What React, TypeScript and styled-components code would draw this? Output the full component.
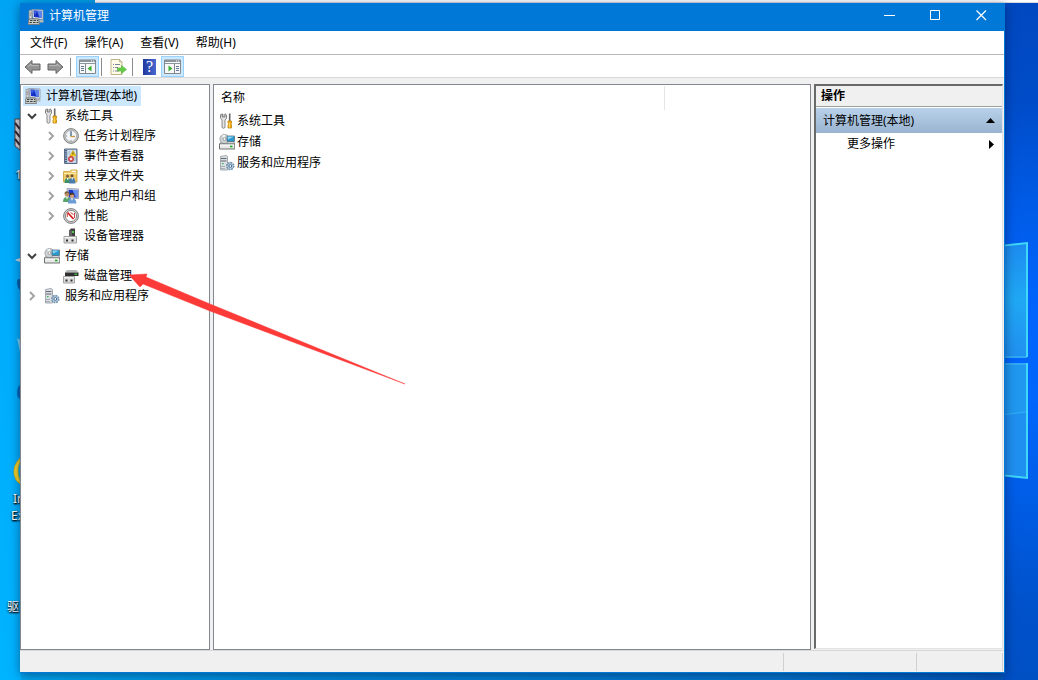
import React, { useState } from "react";
import styled, { createGlobalStyle, css } from "styled-components";

const GlobalStyle = createGlobalStyle`
  *, *::before, *::after { box-sizing: border-box; }
  body { margin: 0; }
  body, button {
    font-family: "Noto Sans", "Noto Sans CJK SC", sans-serif;
    font-size: 12px;
    line-height: 20px;
    color: #000;
  }
  button { padding: 0; border: 0; background: none; cursor: default; text-align: left; white-space: nowrap; }
  ul { list-style: none; margin: 0; padding: 0; }
`;

/* ---------- desktop ---------- */

const Desktop = styled.div`
  position: relative;
  display: flex;
  flex-direction: column;
  min-height: 100vh;
  padding: 0 33px 7px 20px;
  overflow: hidden;
  background:
    linear-gradient(180deg, #0048c0 0, #004cc8 100px, #005ce8 210px, #0064fc 300px, #0066fc 400px, #005ee8 490px, #0052cc 600px, #0050c4 100%) right / 34px 100% no-repeat,
    linear-gradient(180deg, #00a4f4 0, #00acfc 300px, #00b4ff 100%) left / 21px 100% no-repeat,
    linear-gradient(90deg, #00a8f0 0, #0088d8 30%, #0074cc 75%, #0050b8 100%);
`;

const BackStrip = styled.div`
  height: 3px;
  margin: 0 -33px 0 75px;
  background: #fff;
  border-bottom: 1px solid #d8dce4;
`;

const Wallpaper = styled.svg`
  position: absolute;
  right: 0;
  top: 236px;
  width: 38px;
  height: 250px;
`;

const Shortcuts = styled.svg`
  position: absolute;
  left: 0;
  top: 100px;
  width: 20px;
  height: 400px;
`;

const ShortcutLabel = styled.span<{ $left: number; $top: number }>`
  position: absolute;
  left: ${(p) => p.$left}px;
  top: ${(p) => p.$top}px;
  line-height: 16px;
  color: #fff;
  white-space: nowrap;
  text-shadow: 0 1px 2px #000, 1px 1px 2px #000;
`;

const PointerArrow = styled.svg`
  position: absolute;
  left: 128px;
  top: 272px;
  width: 278px;
  height: 114px;
  pointer-events: none;
`;

/* ---------- window frame ---------- */

const Window = styled.main`
  position: relative;
  flex: 1;
  display: flex;
  flex-direction: column;
  background: #f0f0f0;
  border: solid #0078d7;
  border-width: 0 1px 1px 0;
  box-shadow: 0 2px 10px rgba(0, 20, 60, 0.5);
`;

const TitleBar = styled.header`
  display: flex;
  align-items: center;
  height: 28px;
  padding-left: 8px;
  gap: 5px;
  background: #0078d7;
`;

const Title = styled.h1`
  flex: 1;
  margin: 0;
  padding-bottom: 2px;
  font-size: 12px;
  font-weight: 400;
  line-height: 20px;
  color: #fff;
`;

const Caption = styled.div`
  display: flex;
  align-self: stretch;
`;

const CaptionButton = styled.button`
  display: grid;
  place-items: center;
  width: 46px;
  padding-bottom: 4px;
  color: #fff;
`;

const MenuBar = styled.nav`
  display: flex;
  gap: 1px;
  height: 24px;
  padding-left: 2px;
  background: #fff;
  border-bottom: 1px solid #b8b8b8;
`;

const MenuButton = styled.button`
  padding: 0 8px;
  line-height: 23px;
`;

const ToolBar = styled.div`
  display: flex;
  height: 23px;
  padding: 1px 0 0 1px;
  background: #fff;
  border-bottom: 1px solid #d8d8d8;
`;

const ToolButton = styled.button<{ $on?: boolean }>`
  display: grid;
  place-items: center;
  width: 23px;
  height: 21px;
  border: 1px solid ${(p) => (p.$on ? "#99d1ff" : "transparent")};
  background: ${(p) => (p.$on ? "#cce8ff" : "transparent")};
`;

const ToolDivider = styled.span`
  width: 1px;
  height: 18px;
  margin: 2px 5px 0 3px;
  background: #8c8c8c;

  & ~ & {
    margin-left: 2px;
  }
`;

const Body = styled.div`
  flex: 1;
  display: grid;
  grid-template-columns: 190px 1fr 190px;
  column-gap: 3px;
  padding-top: 6px;
`;

const paneFrame = css`
  background: #fff;
  border: 1px solid #828790;
`;

/* ---------- tree ---------- */

const TreePane = styled.nav`
  ${paneFrame}
  padding: 1px 2px;
`;

const TreeRow = styled.div<{ $depth: number }>`
  display: flex;
  align-items: center;
  height: 20px;
  padding-left: ${(p) => Math.max(0, p.$depth - 1) * 19 + (p.$depth ? 2 : 0)}px;
`;

const Expander = styled.button`
  display: grid;
  place-items: center;
  width: 19px;
  height: 20px;
  padding-right: 5px;
`;

const TreeLabel = styled.button<{ $selected?: boolean }>`
  display: flex;
  align-items: center;
  gap: 5px;
  height: 20px;
  ${(p) => p.$selected && css`padding: 0 4px 0 2px; background: #cce8ff;`}
`;

/* ---------- list ---------- */

const ListPane = styled.section`
  ${paneFrame}
  padding-top: 1px;
`;

const ListTable = styled.table`
  width: 100%;
  table-layout: fixed;
  border-collapse: collapse;
`;

const HeadCell = styled.th`
  width: 450px;
  height: 24px;
  padding: 0 0 0 7px;
  border-right: 1px solid #e5e5e5;
  font-weight: 400;
  text-align: left;
`;

const HeadFill = styled.td`
  padding: 0;
`;

const ListCell = styled.td`
  height: 21px;
  padding: 0 0 0 5px;
`;

const ListItem = styled.button`
  display: flex;
  align-items: center;
  gap: 2px;
`;

/* ---------- actions ---------- */

const ActionsPane = styled.aside`
  margin: 0 1px 1px 0;
  background: #fff;
  border: solid;
  border-width: 2px 1px 1px 2px;
  border-color: #696969 #e3e3e3 #e3e3e3 #696969;
`;

const ActionsHeading = styled.h2`
  margin: 0;
  height: 21px;
  padding-left: 5px;
  background: #f0f0f0;
  border-bottom: 1px solid #a0a0a0;
  font-size: 12px;
  font-weight: 700;
  line-height: 20px;
`;

const ActionsGroup = styled.button`
  display: flex;
  align-items: center;
  justify-content: space-between;
  width: 100%;
  height: 25px;
  margin-top: 1px;
  padding: 0 7px;
  background: linear-gradient(#b9d1ea, #99b4d1);
`;

const ActionItem = styled.button`
  display: flex;
  align-items: center;
  justify-content: space-between;
  width: 100%;
  height: 22px;
  padding: 0 8px 0 31px;
`;

/* ---------- status bar ---------- */

const StatusBar = styled.footer`
  display: grid;
  grid-template-columns: 1fr 133px 86px;
  height: 22px;
  padding: 2px 1px 1px 0;
  border-top: 1px solid #d7d7d7;
`;

const StatusCell = styled.div`
  border-right: 1px solid #d0d0d0;
`;

/* ---------- icons ---------- */

const Svg = styled.svg`
  display: block;
  flex: none;
`;

type IconName =
  | "computer" | "tools" | "clock" | "events" | "share" | "users"
  | "performance" | "device" | "storage" | "disk" | "services";

const drawings: Record<IconName, React.ReactNode> = {
  computer: (
    <>
      <path d="M1 1.500l3-.5v9H1z" fill="#d0d4d4" stroke="#888" strokeWidth=".7" />
      <path d="M1.500 4h2M1.500 6h2" stroke="#777" strokeWidth=".8" />
      <path d="M4 .5l11 .5v9.500L5 9.500z" fill="#e4e6ec" stroke="#8890a0" strokeWidth=".8" />
      <path d="M5.500 1.500l8.500.5v7L6 8z" fill="#1430c4" />
      <path d="M9 1.700l5 .3v7L11.500 8.500z" fill="#5c84ec" />
      <path d="M5.500 1.500l4 .2L7 6z" fill="#3c60dc" />
      <path d="M11 11h4.500v2.500H11z" fill="#b4b8b8" />
      <path d="M1 10h9.500l1 5.500H0z" fill="#c8ccc8" stroke="#707070" strokeWidth=".8" />
      <path d="M2 11.500h8M1.500 13.500h9" stroke="#404444" strokeWidth="1.200" strokeDasharray="2.500 1" />
    </>
  ),
  tools: (
    <>
      <path d="M2 1v3.500h1.500V1M6.500 1v3.500H5V1" fill="none" stroke="#909090" />
      <path d="M1.500 2v3q1 1.500 1.500 2V14.500q1.500 1.500 3 0V7q1-.5 1.500-2V2L6 .8V4H3.200V.8z" fill="#e4e4e4" stroke="#707070" strokeWidth=".8" />
      <path d="M10.700.5v8.500" stroke="#686868" strokeWidth="1.600" />
      <path d="M9 8h3.500v2l-.7 1 .7 1v3H9v-3l.7-1-.7-1z" fill="#f0ac14" stroke="#c08408" strokeWidth=".8" />
      <path d="M10.300 9.500v5" stroke="#ffe070" />
    </>
  ),
  clock: (
    <>
      <circle cx="8" cy="8" r="7.400" fill="#c4c6c8" stroke="#787878" strokeWidth=".9" />
      <circle cx="8" cy="8" r="5.600" fill="#f2f5f8" stroke="#a4a4a4" strokeWidth=".7" />
      <path d="M8 3.500V8" stroke="#486c94" strokeWidth="1.400" />
      <path d="M7.500 8.500h4.500" stroke="#d0943c" strokeWidth="1.300" />
      <path d="M8 3v1M3 8h1M8 12v1" stroke="#888" />
    </>
  ),
  events: (
    <>
      <path d="M1.500 1h12.500v14.500H1.500z" fill="#9cb4d4" stroke="#5c6c84" />
      <path d="M4.500 2h8.500v12.500H4.500z" fill="#d4e0ee" />
      <path d="M3 2v13" stroke="#384860" strokeWidth="1.600" strokeDasharray="1.200 1" />
      <path d="M5.500 4h2M5.500 6h1.500M11 10h2M11 12h2" stroke="#98a8bc" />
      <path d="M10 2.500l3 5.500H7z" fill="#ffd418" stroke="#c09c00" strokeWidth=".6" />
      <path d="M10 4.500v2" stroke="#333" />
      <circle cx="8" cy="11" r="2.700" fill="#e05858" stroke="#b03030" strokeWidth=".6" />
      <path d="M7 10l2 2m0-2l-2 2" stroke="#fff" strokeWidth=".8" />
    </>
  ),
  share: (
    <>
      <path d="M.5 3.500h6L8 2h6v12H.5z" fill="#f0cc68" stroke="#c89c38" strokeWidth=".8" />
      <path d="M8.500 3.300h4.500" stroke="#fff" strokeWidth="1.200" />
      <path d="M1 5.500h12.500" stroke="#fae8a8" />
      <circle cx="4.500" cy="8.200" r="1.600" fill="#8c6840" />
      <circle cx="9" cy="7.800" r="1.600" fill="#74522c" />
      <path d="M1.500 15q0-5 3-5t3 5z" fill="#3c9068" />
      <path d="M6 15.500q0-6 3.200-6t3.300 6z" fill="#4c7cac" />
      <path d="M3.800 10l1 2.500.9-2.500M8.200 9.600l1 2.500 1-2.500" fill="#fff" />
    </>
  ),
  users: (
    <>
      <path d="M4 .5l11.500.5v9.500H5z" fill="#dfe3ea" stroke="#8890a8" strokeWidth=".8" />
      <path d="M5.500 1.800l9 .3v7.400H6z" fill="#1838c8" />
      <path d="M9.500 2l5 .1v7.400h-1.500z" fill="#6890f0" />
      <circle cx="4" cy="6.500" r="2.300" fill="#c09468" />
      <path d="M1.500 6q0-3.300 2.800-2.800 2.300.3 2 2.600l-2-.8z" fill="#7c6040" />
      <path d="M0 14Q0 9 4 9t4 5z" fill="#58a468" />
      <circle cx="9" cy="7.800" r="2.300" fill="#d0a078" />
      <path d="M6.500 7.500q0-3.300 2.700-2.800 2.400.2 2.200 2.600l-2.200-.8z" fill="#503820" />
      <path d="M5 15.500q0-5.500 4-5.500t4.500 5.500z" fill="#6c9cd4" />
      <path d="M3 9l1 2.500L5 9M8 10.200l1 2.500 1-2.500" fill="#fff" />
    </>
  ),
  performance: (
    <>
      <circle cx="8" cy="8" r="7.400" fill="#d4d4d4" stroke="#707070" strokeWidth=".9" />
      <circle cx="8" cy="8" r="5.600" fill="#fff" stroke="#808080" strokeWidth=".9" />
      <path d="M4.500 4.500L10.500 11" stroke="#d81818" strokeWidth="1.700" />
      <path d="M4.300 9V5.500M7.500 4.500l3 2M11.500 5v5" fill="none" stroke="#c03030" strokeWidth=".9" />
    </>
  ),
  device: (
    <>
      <path d="M6 2.500l2-2h4v8H6z" fill="#404040" />
      <path d="M6 2.500h3v6H6z" fill="#606060" />
      <path d="M9 3h2v2H9z" fill="#50c850" />
      <path d="M1 8.500h12.500v6.500H1z" fill="#dcdcdc" stroke="#989898" strokeWidth=".9" />
      <path d="M1.500 9.500h11.500" stroke="#f4f4f4" />
      <path d="M3 11.500h2v2H3zM8.500 11.500h2v2h-2z" fill="#303030" />
    </>
  ),
  storage: (
    <>
      <path d="M.5 10L2.500 7.500h12l1.500 2.500z" fill="#d0d4d4" stroke="#888" strokeWidth=".7" />
      <circle cx="5.500" cy="5" r="4.600" fill="#ccd2d4" stroke="#909494" strokeWidth=".7" />
      <path d="M5.500 5L3 1.500 6 .8z" fill="#f4f8f8" />
      <circle cx="5.500" cy="5" r="1.400" fill="#fff" stroke="#888" strokeWidth=".7" />
      <path d="M8 2h7.500v5.500H8z" fill="#2c98d0" stroke="#58707c" strokeWidth=".8" />
      <path d="M8.500 2.500h6.500L9 5.500z" fill="#8cd4f4" />
      <path d="M.5 10h15.300v5H.5z" fill="#e8e8e8" stroke="#606464" strokeWidth=".9" />
      <path d="M1 11h14" stroke="#fff" />
      <path d="M11 12.500h2.500" stroke="#18b018" strokeWidth="1.600" />
    </>
  ),
  disk: (
    <>
      <path d="M4 2h9.500l2 2.500H2z" fill="#b4b8b8" />
      <path d="M2 4.500h13.500V8H2z" fill="#303030" />
      <path d="M11.500 6.200H14" stroke="#48d848" strokeWidth="1.200" />
      <path d="M.5 8.500h11V15H.5z" fill="#dcdcdc" stroke="#989898" strokeWidth=".9" />
      <path d="M1 9.500h10" stroke="#f4f4f4" />
      <path d="M2.500 11.500h2v2h-2zM7.500 11.500h2v2h-2z" fill="#303030" />
    </>
  ),
  services: (
    <>
      <path d="M1.500 1.500L7 .5l1.500 1V15H1.500z" fill="#dce0e4" stroke="#9098a0" strokeWidth=".8" />
      <path d="M2 3.500h5.500M2 6h5.500" stroke="#606870" strokeWidth="1.200" />
      <path d="M2 11.500h4M2 13.500h4" stroke="#a4acb4" />
      <path d="M3 8.700h1.500" stroke="#30b050" strokeWidth="1.200" />
      <circle cx="11.300" cy="11" r="3.500" fill="#b4cce0" stroke="#7090ac" strokeWidth="1.500" strokeDasharray="1.800 .9" />
      <circle cx="11.300" cy="11" r="1.400" fill="#fff" stroke="#486c90" />
    </>
  ),
};

const Icon = ({ name }: { name: IconName }) => (
  <Svg width="16" height="16" viewBox="0 0 16 16" aria-hidden="true">
    {drawings[name]}
  </Svg>
);

const Chevron = ({ open }: { open: boolean }) => (
  <Svg width="10" height="10" viewBox="0 0 10 10" fill="none" aria-hidden="true">
    {open ? (
      <path d="M1 3l4 4 4-4" stroke="#404040" strokeWidth="2" />
    ) : (
      <path d="M3 1l4 4-4 4" stroke="#a4a4a4" strokeWidth="2" />
    )}
  </Svg>
);

const NavArrow = ({ back }: { back?: boolean }) => (
  <Svg width="17" height="16" viewBox="0 0 17 16" aria-hidden="true">
    <path
      d={back ? "M1 8L8 1.500V5h8v6H8v3.500z" : "M16 8L9 1.500V5H1v6h8v3.500z"}
      fill="#949494"
      stroke="#666"
      strokeLinejoin="round"
    />
    <path d={back ? "M4 7.500L7 5V6.500h8" : "M13 7.500L10 5V6.500H2"} fill="none" stroke="#b8b8b8" />
  </Svg>
);

const PaneIcon = ({ right }: { right?: boolean }) => (
  <Svg width="17" height="15" viewBox="0 0 17 15" aria-hidden="true">
    <path d="M.5 1h16v13.500H.5z" fill="#f8f8f8" stroke="#808890" />
    <path d="M1 2h15" stroke="#8c949c" strokeWidth="2" />
    <path d="M1 4.500h15" stroke="#8c949c" />
    <path d="M12 2h1m1 0h1" stroke="#fff" />
    {right ? (
      <>
        <path d="M10.500 5v9" stroke="#808890" />
        <path d="M12 7.500h3M12 9.500h3M12 11.500h3" stroke="#607890" />
        <path d="M4.500 6.500v6l4-3z" fill="#38b030" />
      </>
    ) : (
      <>
        <path d="M6.500 5v9" stroke="#808890" />
        <path d="M2 7.500h3M2 9.500h3M2 11.500h3" stroke="#607890" />
        <path d="M12.500 6.500v6l-4-3z" fill="#38b030" />
      </>
    )}
  </Svg>
);

const ExportIcon = () => (
  <Svg width="17" height="16" viewBox="0 0 17 16" aria-hidden="true">
    <path d="M1 .5h8.500L12 3v12.500H1z" fill="#fffbe6" stroke="#b8aa80" strokeWidth=".9" />
    <path d="M9.500.5V3H12" fill="none" stroke="#b8aa80" strokeWidth=".8" />
    <path d="M3 5.500h1m1 0h5M3 8.500h1m1 0h3M3 12h1m1 0h4" stroke="#7884a0" />
    <path d="M7.500 9h4V6.500l5 4-5 4V12h-4z" fill="#64cc48" stroke="#50b034" strokeWidth=".6" />
  </Svg>
);

const HelpGlyph = styled.span`
  display: block;
  width: 13px;
  height: 16px;
  background: linear-gradient(90deg, #2038a0, #4868d0);
  font-family: "Liberation Serif", serif;
  font-size: 16px;
  font-weight: 400;
  line-height: 16px;
  text-align: center;
  color: #fff;
`;

/* ---------- data ---------- */

type Node = { id: string; label: string; icon: IconName; depth: number; branch?: boolean; parent?: string };

const nodes: Node[] = [
  { id: "root", label: "计算机管理(本地)", icon: "computer", depth: 0 },
  { id: "tools", label: "系统工具", icon: "tools", depth: 1, branch: true },
  { id: "tasks", label: "任务计划程序", icon: "clock", depth: 2, branch: true, parent: "tools" },
  { id: "events", label: "事件查看器", icon: "events", depth: 2, branch: true, parent: "tools" },
  { id: "share", label: "共享文件夹", icon: "share", depth: 2, branch: true, parent: "tools" },
  { id: "users", label: "本地用户和组", icon: "users", depth: 2, branch: true, parent: "tools" },
  { id: "perf", label: "性能", icon: "performance", depth: 2, branch: true, parent: "tools" },
  { id: "device", label: "设备管理器", icon: "device", depth: 2, parent: "tools" },
  { id: "storage", label: "存储", icon: "storage", depth: 1, branch: true },
  { id: "disk", label: "磁盘管理", icon: "disk", depth: 2, parent: "storage" },
  { id: "services", label: "服务和应用程序", icon: "services", depth: 1, branch: true },
];

const LeafSlot = styled.span`
  width: 19px;
`;

const Tree = () => {
  const [open, setOpen] = useState<string[]>(["tools", "storage"]);
  const [selected, setSelected] = useState("root");
  const toggle = (id: string) =>
    setOpen((ids) => (ids.includes(id) ? ids.filter((i) => i !== id) : [...ids, id]));

  return (
    <TreePane aria-label="控制台树">
      <ul>
        {nodes
          .filter((n) => !n.parent || open.includes(n.parent))
          .map((n) => (
            <li key={n.id}>
              <TreeRow $depth={n.depth}>
                {n.branch && (
                  <Expander aria-label={n.label} aria-expanded={open.includes(n.id)} onClick={() => toggle(n.id)}>
                    <Chevron open={open.includes(n.id)} />
                  </Expander>
                )}
                {!n.branch && n.depth > 0 && <LeafSlot />}
                <TreeLabel $selected={selected === n.id} onClick={() => setSelected(n.id)}>
                  <Icon name={n.icon} />
                  {n.label}
                </TreeLabel>
              </TreeRow>
            </li>
          ))}
      </ul>
    </TreePane>
  );
};

export default function App() {
  return (
    <Desktop>
      <GlobalStyle />
      <BackStrip />
      <Wallpaper viewBox="0 0 38 250" aria-hidden="true">
        <defs>
          <linearGradient id="pane" x1="0" y1="0" x2="0" y2="1">
            <stop offset="0" stopColor="#1c8cf0" />
            <stop offset=".5" stopColor="#20a8f4" />
            <stop offset="1" stopColor="#2090f0" />
          </linearGradient>
        </defs>
        <path d="M0 10L27 7v114H0z" fill="url(#pane)" />
        <path d="M0 127h27v115L0 239z" fill="#2090f0" />
        <path d="M0 128h27v48L0 179z" fill="#2098f0" />
        <path d="M0 179L27 176" stroke="#30b0f4" />
        <path d="M0 121h27M0 128h27" stroke="#30a8f4" strokeWidth="2" />
        <path d="M0 10L27 7v114M27 127v115L0 239" fill="none" stroke="#40d8f8" strokeWidth="2" />
      </Wallpaper>
      <Shortcuts viewBox="0 0 20 400" aria-hidden="true">
        <path d="M15 19h5v31l-5-4z" fill="#d8d4d8" stroke="#584040" />
        <path d="M15 23l5 6M15 31l5 6M15 39l5 6" stroke="#382828" strokeWidth="2" />
        <path d="M15 160l5-2v4z" fill="#d8d8d8" />
        <path d="M17 181q1-3 3-2v11q-3-2-3-9z" fill="#0060a8" />
        <path d="M17 238l3 2v12z" fill="#80d0f0" />
        <path d="M17 293q0-6 3-8v14q-3-1-3-6z" fill="#0068b8" />
        <path d="M20 358q-7 7-6 16 1 7 6 10v-4q-4-9 0-18z" fill="#f4d428" stroke="#c8a010" strokeWidth=".7" />
      </Shortcuts>
      <ShortcutLabel $left={15} $top={167}>1</ShortcutLabel>
      <ShortcutLabel $left={13} $top={491}>In</ShortcutLabel>
      <ShortcutLabel $left={11} $top={508}>Ex</ShortcutLabel>
      <ShortcutLabel $left={7} $top={599}>驱</ShortcutLabel>

      <Window>
        <TitleBar>
          <Icon name="computer" />
          <Title>计算机管理</Title>
          <Caption>
            <CaptionButton aria-label="最小化">
              <Svg width="11" height="11" viewBox="0 0 11 11"><path d="M0 5.500h11" stroke="currentColor" /></Svg>
            </CaptionButton>
            <CaptionButton aria-label="最大化">
              <Svg width="11" height="11" viewBox="0 0 11 11"><path d="M.5.500h9v9H.5z" fill="none" stroke="currentColor" /></Svg>
            </CaptionButton>
            <CaptionButton aria-label="关闭">
              <Svg width="11" height="11" viewBox="0 0 11 11"><path d="M.5.500l9.500 9.500m0-9.500l-9.500 9.500" stroke="currentColor" strokeWidth="1.200" /></Svg>
            </CaptionButton>
          </Caption>
        </TitleBar>

        <MenuBar>
          {["文件(F)", "操作(A)", "查看(V)", "帮助(H)"].map((m) => (
            <MenuButton key={m}>{m}</MenuButton>
          ))}
        </MenuBar>

        <ToolBar role="toolbar">
          <ToolButton aria-label="后退"><NavArrow back /></ToolButton>
          <ToolButton aria-label="前进"><NavArrow /></ToolButton>
          <ToolDivider />
          <ToolButton $on aria-label="显示/隐藏控制台树"><PaneIcon /></ToolButton>
          <ToolDivider />
          <ToolButton aria-label="导出列表"><ExportIcon /></ToolButton>
          <ToolDivider />
          <ToolButton aria-label="帮助"><HelpGlyph>?</HelpGlyph></ToolButton>
          <ToolButton $on aria-label="显示/隐藏操作窗格"><PaneIcon right /></ToolButton>
        </ToolBar>

        <Body>
          <Tree />
          <ListPane>
            <ListTable>
              <thead>
                <tr>
                  <HeadCell scope="col">名称</HeadCell>
                  <HeadFill />
                </tr>
              </thead>
              <tbody>
                {nodes.filter((n) => n.depth === 1).map((n) => (
                  <tr key={n.id}>
                    <ListCell colSpan={2}>
                      <ListItem><Icon name={n.icon} />{n.label}</ListItem>
                    </ListCell>
                  </tr>
                ))}
              </tbody>
            </ListTable>
          </ListPane>
          <ActionsPane>
            <ActionsHeading>操作</ActionsHeading>
            <ActionsGroup>
              计算机管理(本地)
              <Svg width="9" height="5" viewBox="0 0 9 5" aria-hidden="true"><path d="M0 5l4.500-5L9 5z" /></Svg>
            </ActionsGroup>
            <ActionItem>
              更多操作
              <Svg width="5" height="9" viewBox="0 0 5 9" aria-hidden="true"><path d="M0 0l5 4.500L0 9z" /></Svg>
            </ActionItem>
          </ActionsPane>
        </Body>

        <StatusBar>
          <StatusCell />
          <StatusCell />
          <StatusCell />
        </StatusBar>
      </Window>

      <PointerArrow viewBox="0 0 278 114" aria-hidden="true">
        <path d="M1 3L19 2l-1 3L82 32 277 112 82 39 15 12l-3 3z" fill="#fc3a38" stroke="#fc3a38" strokeWidth=".5" />
      </PointerArrow>
    </Desktop>
  );
}
